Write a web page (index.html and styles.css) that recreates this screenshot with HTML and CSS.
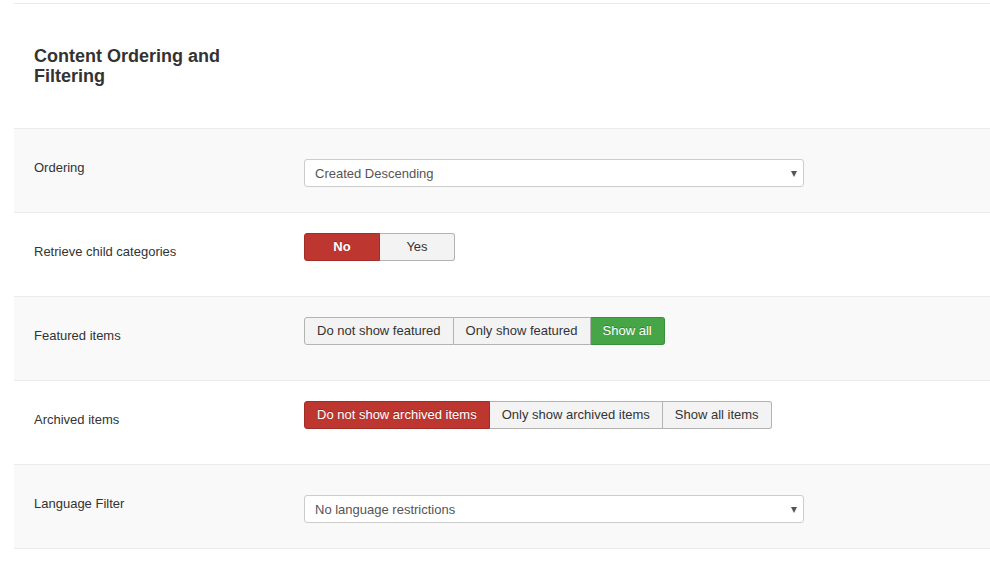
FILE: index.html
```html
<!DOCTYPE html>
<html>
<head>
<meta charset="utf-8">
<link rel="stylesheet" href="styles.css">
</head>
<body>
<div class="panel">
  <div class="header">
    <h3 class="title">Content Ordering and Filtering</h3>
  </div>
  <div class="row odd">
    <div class="label">Ordering</div>
    <div class="control ctl-select">
      <div class="select"><span class="value">Created Descending</span><span class="arrow"></span></div>
    </div>
  </div>
  <div class="row">
    <div class="label">Retrieve child categories</div>
    <div class="control ctl-btns">
      <div class="btn-group">
        <span class="btn danger wide bold">No</span><span class="btn wide">Yes</span>
      </div>
    </div>
  </div>
  <div class="row odd">
    <div class="label">Featured items</div>
    <div class="control ctl-btns">
      <div class="btn-group">
        <span class="btn">Do not show featured</span><span class="btn">Only show featured</span><span class="btn success">Show all</span>
      </div>
    </div>
  </div>
  <div class="row">
    <div class="label">Archived items</div>
    <div class="control ctl-btns">
      <div class="btn-group">
        <span class="btn danger">Do not show archived items</span><span class="btn">Only show archived items</span><span class="btn">Show all items</span>
      </div>
    </div>
  </div>
  <div class="row odd last">
    <div class="label">Language Filter</div>
    <div class="control ctl-select">
      <div class="select"><span class="value">No language restrictions</span><span class="arrow"></span></div>
    </div>
  </div>
</div>
</body>
</html>
```
FILE: styles.css
```css
html, body {
  margin: 0;
  padding: 0;
  background: #fff;
}
body {
  font-family: "Liberation Sans", Arial, sans-serif;
  font-size: 13px;
  color: #333;
}
.panel {
  margin: 3px 0 0 14px;
}
.header {
  border-top: 1px solid #ebebeb;
  height: 125px;
  box-sizing: border-box;
  padding: 42px 0 0 20px;
}
.title {
  margin: 0;
  width: 210px;
  font-size: 18px;
  line-height: 20px;
  font-weight: bold;
  color: #333;
}
.row {
  display: flex;
  height: 83px;
  border-top: 1px solid #ebebeb;
}
.row.last {
  border-bottom: 1px solid #ebebeb;
}
.row.odd {
  background: #f9f9f9;
}
.label {
  width: 270px;
  padding: 30px 0 0 20px;
  line-height: 18px;
  color: #333;
}
.control {
  flex: 1;
}
.ctl-select {
  padding-top: 30px;
}
.ctl-btns {
  padding-top: 20px;
}
.select {
  width: 500px;
  height: 28px;
  box-sizing: border-box;
  border: 1px solid #ccc;
  border-radius: 3px;
  background: #fff;
  display: flex;
  align-items: center;
  justify-content: space-between;
  padding: 0 6px 0 10px;
  color: #555;
}
.value {
  line-height: 18px;
  padding-top: 2px;
}
.arrow {
  width: 0;
  height: 0;
  border-left: 3px solid transparent;
  border-right: 3px solid transparent;
  border-top: 6px solid #555;
  margin-top: 1px;
}
.btn-group {
  display: inline-flex;
}
.btn {
  display: inline-block;
  height: 28px;
  box-sizing: border-box;
  padding: 0 12px;
  line-height: 26px;
  border: 1px solid #b3b3b3;
  border-left-width: 0;
  background: #f3f3f3;
  color: #333;
  text-align: center;
}
.btn:first-child {
  border-left-width: 1px;
  border-radius: 3px 0 0 3px;
}
.btn:last-child {
  border-radius: 0 3px 3px 0;
}
.btn.wide {
  width: 75px;
  padding: 0;
}
.btn.wide:first-child {
  width: 76px;
}
.btn.bold {
  font-weight: bold;
}
.btn.danger {
  background: #bd362f;
  border-color: #a32d27;
  color: #fff;
  text-shadow: 0 -1px 0 rgba(0, 0, 0, 0.25);
}
.btn.success {
  background: #46a546;
  border-color: #3a8e3a;
  color: #fff;
  text-shadow: 0 -1px 0 rgba(0, 0, 0, 0.25);
}
```
